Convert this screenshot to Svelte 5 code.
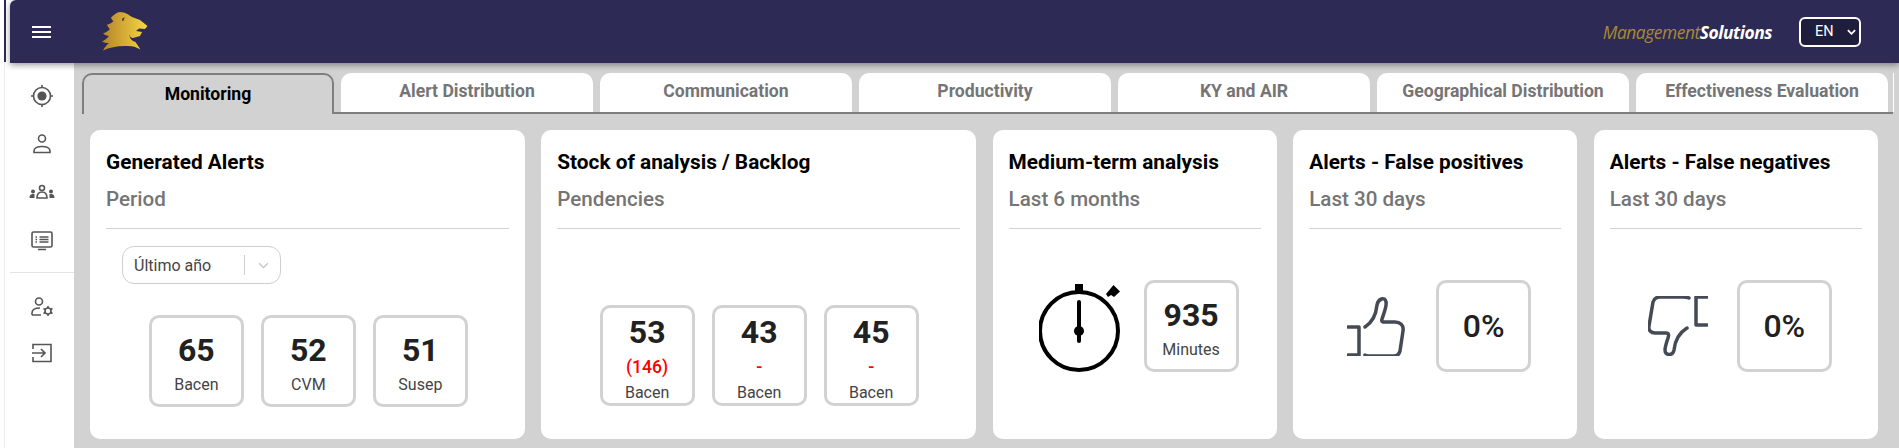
<script lang="ts">
	const tabs = [
		'Monitoring',
		'Alert Distribution',
		'Communication',
		'Productivity',
		'KY and AIR',
		'Geographical Distribution',
		'Effectiveness Evaluation'
	];
	const alerts = [
		{ value: 65, label: 'Bacen' },
		{ value: 52, label: 'CVM' },
		{ value: 51, label: 'Susep' }
	];
	const stock = [
		{ value: 53, note: '(146)', label: 'Bacen' },
		{ value: 43, note: '-', label: 'Bacen' },
		{ value: 45, note: '-', label: 'Bacen' }
	];
</script>

<div class="app">
	<header class="topbar">
		<button class="menu" aria-label="Menu"><span></span><span></span><span></span></button>
		<svg class="logo" viewBox="0 0 46 39" aria-label="Logo">
			<defs>
				<linearGradient id="gold" x1="0" x2="1" y1="0.5" y2="0.5">
					<stop offset="0" stop-color="#b5832a" />
					<stop offset="1" stop-color="#f6d743" />
				</linearGradient>
			</defs>
			<path
				fill="url(#gold)"
				d="M18 0 C23 0 27 3 30 5 L38 8 L45.500 14 L43 17 L37 16.500 L34 19 L40 20 L38 24 L31 26 C29 26 28 25 27.500 22 C27.500 27 30 29 33.500 30 L38.500 37.500 C34 35 31 34 26 34 C17 33.500 8 35 1 38.500 C2.500 35.500 4.500 33 7 31 C4.500 31 2 30.500 0 29.500 C2.500 28.500 5 26.500 7 24 C5 24 3 23 1 21.500 C3.500 20.500 6 19 8 17 C7 16.500 6 15 5 12.500 C7 12.500 9.500 11 11.500 9 C10.500 8.500 9.500 7.500 9 5.500 C12 3 15 0 18 0 Z"
			/>
			<path fill="#2d2b55" d="M20 8.500 C20 6.500 21 5.500 23 5.500 C22 6.500 21.500 7.500 21.500 9 Z" />
		</svg>
		<div class="brand"><span class="brand-a">Management</span><span class="brand-b">Solutions</span></div>
		<div class="lang">
			<span>EN</span>
			<svg viewBox="0 0 10 6"><path d="M1 1 L5 5 L9 1" /></svg>
		</div>
	</header>

	<div class="body">
		<nav class="sidebar">
			<div class="nav-top">
				<svg viewBox="0 0 24 24">
					<circle cx="12" cy="12" r="8.500" />
					<circle cx="12" cy="12" r="4.600" class="solid" />
					<path d="M12 1v3M12 20v3M1 12h3M20 12h3" />
				</svg>
				<svg viewBox="0 0 24 24">
					<circle cx="12" cy="6.500" r="3.500" />
					<path d="M4 20.500v-1.500c0-2.500 3-4.500 8-4.500s8 2 8 4.500v1.500z" />
				</svg>
				<svg viewBox="0 0 24 24">
					<circle cx="12" cy="8" r="2.500" />
					<path d="M7 18c0-4 2-6 5-6s5 2 5 6z" />
					<circle cx="3" cy="11.500" r="2" class="solid" />
					<circle cx="21" cy="11.500" r="2" class="solid" />
					<path class="solid" d="M-0.500 18c0-2.500 1-4 3.500-4h1.500V18zM24.500 18c0-2.500-1-4-3.500-4h-1.500V18z" />
				</svg>
				<svg viewBox="0 0 24 24">
					<rect x="2" y="3" width="20" height="15" rx="1.500" />
					<path d="M9.500 8h9M9.500 10.500h9M9.500 13h9M5.500 8h1.500M5.500 10.500h1.500M5.500 13h1.500M8 20.500h8" />
				</svg>
			</div>
			<div class="nav-bottom">
				<svg viewBox="0 0 24 24">
					<circle cx="9" cy="6.500" r="3.500" />
					<path d="M2 20v-2c0-3 3-5 8-5M2 20h9" />
					<circle cx="18" cy="16" r="3" />
					<path d="M18 11v2M18 19v2M13.500 13.500l1.700 1M20.800 17.500l1.700 1M13.500 18.500l1.700-1M20.800 14.500l1.700-1" />
				</svg>
				<svg viewBox="0 0 24 24">
					<path d="M3 8V3.500h18v17H3V16" />
					<path d="M2 12h13M11 8l4 4-4 4" />
				</svg>
			</div>
		</nav>

		<main class="content">
			<div class="tabs">
				{#each tabs as tab, i}
					<div class="tab" class:active={i === 0}>{tab}</div>
				{/each}
			</div>

			<div class="cards">
				<section class="card wide">
					<h2>Generated Alerts</h2>
					<p class="sub">Period</p>
					<div class="select">
						<span class="select-value">Último año</span>
						<i></i>
						<svg viewBox="0 0 12 8"><path d="M1 1.500 L6 6.500 L11 1.500" /></svg>
					</div>
					<div class="stats alerts">
						{#each alerts as a}
							<div class="stat">
								<strong>{a.value}</strong>
								<span>{a.label}</span>
							</div>
						{/each}
					</div>
				</section>

				<section class="card wide">
					<h2>Stock of analysis / Backlog</h2>
					<p class="sub">Pendencies</p>
					<div class="stats backlog">
						{#each stock as s}
							<div class="stat tall">
								<strong>{s.value}</strong>
								<em>{s.note}</em>
								<span>{s.label}</span>
							</div>
						{/each}
					</div>
				</section>

				<section class="card">
					<h2>Medium-term analysis</h2>
					<p class="sub">Last 6 months</p>
					<div class="duo">
						<svg class="timer" viewBox="0 0 84 92">
							<circle cx="40" cy="51" r="39" />
							<path class="thick" d="M40 4v9" />
							<path class="hand" d="M40 22v39" />
							<circle cx="40" cy="51" r="5" class="dot" />
							<path class="dot" d="M74.500 5 L81 11.500 L75 17 L72 15 L69 17 L67 14 L69.500 11 Z" />
						</svg>
						<div class="stat">
							<strong>935</strong>
							<span>Minutes</span>
						</div>
					</div>
				</section>

				<section class="card">
					<h2>Alerts - False positives</h2>
					<p class="sub">Last 30 days</p>
					<div class="duo thumbs">
						<svg class="thumb" viewBox="0 0 60 60">
							<path d="M1 32h11v29M1 60h11" transform="translate(0 -1)" />
							<path d="M18 31c8-5 11-12 12-22 1-6 8-9 9-3 1 4-2 11-4 17-1 3 1 3 3 3h10c5 0 9 3 8 9l-3 20c-1 4-3 5-6 5H24c-2 0-5 0-6-1" />
						</svg>
						<div class="stat pct"><strong>0%</strong></div>
					</div>
				</section>

				<section class="card">
					<h2>Alerts - False negatives</h2>
					<p class="sub">Last 30 days</p>
					<div class="duo thumbs">
						<svg class="thumb" viewBox="0 0 60 60">
							<path d="M59 29H48V1h11" />
							<path d="M41 2c-2-1-4-1-6-1H12C8 1 6 3 5 6L1 30c-1 4 2 7 6 7h11c3 0 3 2 2 5-2 6-3 9-3 12 0 6 8 6 9 0 1-10 5-17 13-22" />
						</svg>
						<div class="stat pct"><strong>0%</strong></div>
					</div>
				</section>
			</div>
		</main>
	</div>
</div>

<style>
	:global(body) {
		margin: 0;
		background: #fff;
		overflow: hidden;
	}

	.app {
		position: relative;
		height: 448px;
		padding-left: 10px;
		box-sizing: border-box;
		font-family: Roboto, 'Liberation Sans', sans-serif;
		color: #212121;
		display: flex;
		flex-direction: column;
		overflow: hidden;
	}

	/* the clipped window edge left of the header */
	.app::before {
		content: '';
		position: absolute;
		left: 4px;
		top: 0;
		width: 2px;
		height: 62px;
		background: #2d2b55;
	}

	.app::after {
		content: '';
		position: absolute;
		left: 4px;
		top: 62px;
		bottom: 0;
		width: 1px;
		background: #ececec;
	}

	.topbar {
		flex: none;
		height: 63px;
		display: flex;
		align-items: center;
		background: #2d2b55;
		border-top-left-radius: 6px;
		box-shadow: 0 2px 6px rgba(0, 0, 0, 0.4);
		position: relative;
		z-index: 2;
	}

	.menu {
		width: 19px;
		height: 12px;
		margin-left: 22px;
		padding: 0;
		border: 0;
		background: none;
		display: flex;
		flex-direction: column;
		justify-content: space-between;
	}

	.menu span {
		height: 2px;
		background: #fff;
	}

	.logo {
		width: 46px;
		height: 39px;
		margin-left: 51px;
	}

	.brand {
		margin-left: auto;
		font-family: 'Open Sans', sans-serif;
		font-style: italic;
		font-size: 17.400px;
		letter-spacing: -0.450px;
	}

	.brand-a {
		color: #a98a32;
	}

	.brand-b {
		color: #fff;
		font-weight: 700;
	}

	.lang {
		width: 62px;
		height: 30px;
		margin: 0 38px 0 27px;
		box-sizing: border-box;
		border: 2px solid #fff;
		border-radius: 6px;
		background: #1e1e3c;
		color: #fff;
		font-size: 14.500px;
		display: flex;
		align-items: center;
		justify-content: space-between;
		padding: 0 3px 0 14px;
	}

	.lang svg {
		width: 9px;
		height: 6px;
		fill: none;
		stroke: #fff;
		stroke-width: 2;
	}

	.body {
		flex: 1;
		display: flex;
		min-height: 0;
	}

	.sidebar {
		flex: none;
		width: 64px;
		background: #fff;
		display: flex;
		flex-direction: column;
	}

	.sidebar svg {
		width: 24px;
		height: 24px;
		fill: none;
		stroke: #555;
		stroke-width: 1.600;
		overflow: visible;
	}

	.sidebar .solid {
		fill: #555;
		stroke: none;
	}

	.nav-top,
	.nav-bottom {
		display: flex;
		flex-direction: column;
		align-items: center;
	}

	.nav-top {
		gap: 24.200px;
		padding: 21px 0 19px;
		border-bottom: 1px solid #e4e4e4;
	}

	.nav-bottom {
		padding-top: 22px;
		gap: 22px;
	}

	.content {
		flex: 1;
		min-width: 0;
		background: #d2d2d2;
		padding: 10px 6px 0 8px;
	}

	.tabs {
		position: relative;
		display: flex;
		gap: 7px;
		height: 39px;
		border-bottom: 2px solid #7f7f7f;
	}

	.tabs::after {
		content: '';
		position: absolute;
		right: -1px;
		top: 0;
		bottom: 0;
		width: 1px;
		background: #fff;
	}

	.tab {
		flex: 0 0 252px;
		height: 39px;
		box-sizing: border-box;
		background: #fff;
		border-radius: 10px 10px 0 0;
		color: #757575;
		font-size: 17.600px;
		font-weight: 700;
		line-height: 36px;
		text-align: center;
	}

	.tab.active {
		height: 41px;
		background: #d2d2d2;
		color: #000;
		border: 2px solid #7f7f7f;
		border-bottom: 0;
		line-height: 38px;
	}

	.cards {
		display: flex;
		gap: 16.600px;
		margin: 16px 0 0 8px;
	}

	.card {
		flex: 0 0 284px;
		height: 309px;
		box-sizing: border-box;
		background: #fff;
		border-radius: 10px;
		padding: 20px 16px 0;
	}

	.card.wide {
		flex-basis: 434.700px;
	}

	h2 {
		margin: 0;
		height: 24px;
		color: #000;
		font-size: 20.800px;
		font-weight: 700;
		line-height: 24px;
	}

	.sub {
		margin: 0;
		height: 55px;
		padding-top: 13px;
		box-sizing: border-box;
		border-bottom: 1px solid #d2d2d2;
		color: #757575;
		font-size: 20.600px;
		font-weight: 500;
		line-height: 24px;
	}

	.select {
		width: 159px;
		height: 38px;
		margin: 17px 0 0 16px;
		box-sizing: border-box;
		border: 1px solid #cfcfcf;
		border-radius: 12px;
		display: flex;
		align-items: center;
		padding-left: 11px;
		font-size: 16px;
		color: #444;
	}

	.select-value {
		width: 110px;
	}

	.select i {
		width: 1px;
		height: 20px;
		background: #cfcfcf;
	}

	.select svg {
		width: 11px;
		height: 7px;
		margin-left: 13px;
		fill: none;
		stroke: #c4c4c4;
		stroke-width: 1.500;
	}

	.stats {
		display: flex;
		justify-content: center;
		gap: 17px;
	}

	.alerts {
		margin-top: 31px;
		padding-left: 2px;
	}

	.backlog {
		margin-top: 76px;
		padding-left: 1px;
	}

	.stat {
		flex: 0 0 95px;
		height: 92px;
		box-sizing: border-box;
		border: 3px solid #d2d2d2;
		border-radius: 10px;
		display: flex;
		flex-direction: column;
		align-items: center;
		justify-content: center;
	}

	.stat strong {
		font-size: 32px;
		font-weight: 700;
		line-height: 36px;
		margin-top: 4px;
	}

	.stat span {
		margin-top: 7px;
		font-size: 16px;
		line-height: 20px;
		color: #444;
	}

	.stat.tall {
		height: 101px;
		justify-content: flex-start;
		padding-top: 2px;
	}

	.stat em {
		margin-top: 8px;
		height: 18px;
		color: #f00;
		font-size: 17.600px;
		font-style: normal;
		font-weight: 500;
		line-height: 18px;
	}

	.stat.tall span {
		margin-top: 7px;
	}

	.duo {
		display: flex;
		align-items: center;
		margin-top: 51px;
	}

	.timer {
		width: 84px;
		height: 92px;
		margin: 0 21px 0 30px;
		fill: none;
		stroke: #000;
		stroke-width: 4;
	}

	.timer .thick {
		stroke-width: 8;
	}

	.timer .hand {
		stroke-width: 4;
		stroke-linecap: round;
	}

	.timer .dot {
		fill: #000;
		stroke: none;
	}

	.thumb {
		width: 60px;
		height: 60px;
		margin: 0 29px 0 38px;
		fill: none;
		stroke: #444b55;
		stroke-width: 3.500;
		stroke-linecap: round;
		stroke-linejoin: round;
	}

	.stat.pct strong {
		font-size: 32px;
		font-weight: 500;
		margin-top: 0;
	}
</style>
